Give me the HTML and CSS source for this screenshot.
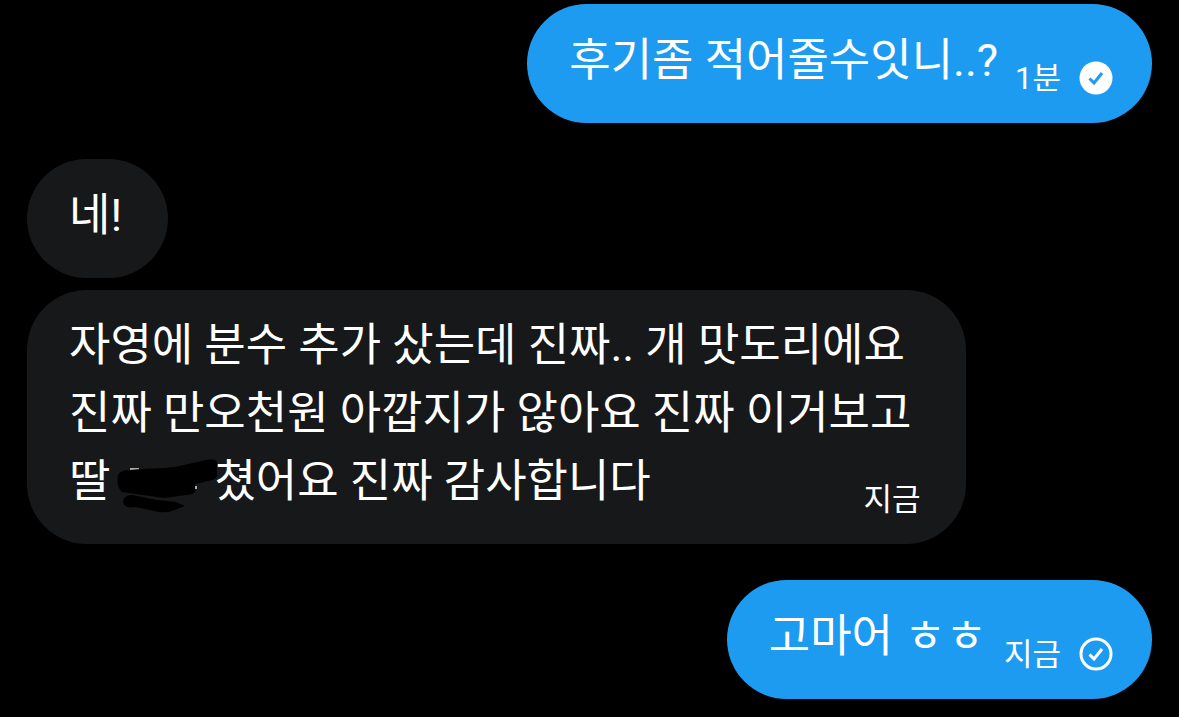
FILE: index.html
```html
<!DOCTYPE html>
<html lang="ko">
<head>
    <meta charset="UTF-8">
    <meta name="viewport" content="width=device-width, initial-scale=1">
    <title>메시지</title>
    <link rel="stylesheet" href="styles.css">
</head>
<body>
<main class="chat">
    <div class="bubble sent">
        <p class="text">후기좀 적어줄수잇니..?</p>
        <span class="time">1분</span>
        <svg class="status" viewBox="0 0 34 34" role="img" aria-label="읽음">
            <circle cx="17" cy="17" r="16.5" fill="#fff"/>
            <path d="M10.500 17.500l4.500 4.500 8-10" fill="none" stroke="#1d9bf0" stroke-width="3"/>
        </svg>
    </div>
    <div class="bubble received first">
        <p class="text">네!</p>
    </div>
    <div class="bubble received long">
        <p class="text">자영에 분수 추가 샀는데 진짜.. 개 맛도리에요<br>
            진짜 만오천원 아깝지가 않아요 진짜 이거보고<br>
            딸<svg class="scribble" viewBox="0 0 104 60" aria-hidden="true">
                <path d="M20 13h9v3h-9zM85 31h2v3h-2z" fill="#aaa"/>
                <path d="M8 20C10 16 15 15 20 15C36 13 50 14 65 12L96 5Q105 3 107 7V21Q106 24 102 25L85 29V37Q83 40 76 40L54 43L12 37Q6 32 8 20zM13 47Q14 40 22 40L47 45Q60 46 66 47L75 51L62 56Q56 58 49 57L25 52Q14 54 13 47z" fill="#000"/>
            </svg>쳤어요 진짜 감사합니다</p>
        <span class="time">지금</span>
    </div>
    <div class="bubble sent last">
        <p class="text">고마어 ㅎㅎ</p>
        <span class="time">지금</span>
        <svg class="status" viewBox="0 0 34 34" role="img" aria-label="전송됨">
            <circle cx="17" cy="17" r="15" fill="none" stroke="#fff" stroke-width="3"/>
            <path d="M10.500 17.500l4.500 4.500 8-10" fill="none" stroke="#fff" stroke-width="3"/>
        </svg>
    </div>
</main>
</body>
</html>
```
FILE: styles.css
```css
body {
    margin: 0;
    background: #000;
    color: #fff;
    font-family: Roboto, "Noto Sans CJK KR", sans-serif;
}
.chat {
    display: flex;
    flex-direction: column;
    padding: 4px 27px 18px;
}
.bubble {
    display: flex;
    align-items: flex-end;
    box-sizing: border-box;
    padding: 23px 39px 28px 42px;
    border-radius: 60px;
}
.sent {
    align-self: flex-end;
    background: #1d9bf0;
}
.received {
    align-self: flex-start;
    background: #16181a;
}
.first {
    margin-top: 36px;
    padding-right: 46px;
}
/* the time shares the last line of a long message */
.long {
    display: grid;
    margin-top: 12px;
    padding: 22px 46px 28px 42px;
}
.long .text,
.long .time {
    grid-area: 1 / 1;
}
.long .time {
    justify-self: end;
}
.last {
    margin-top: 36px;
}
.text {
    margin: 0;
    padding-right: 9px;
    font-size: 45px;
    line-height: 68px;
    white-space: nowrap;
}
.first .text {
    padding-right: 0;
}
.time {
    margin-left: 8px;
    font-size: 31px;
    line-height: 32px;
}
.status {
    width: 34px;
    height: 34px;
    margin-left: 18px;
}
.scribble {
    width: 104px;
    height: 60px;
    overflow: visible;
    vertical-align: middle;
}
```
